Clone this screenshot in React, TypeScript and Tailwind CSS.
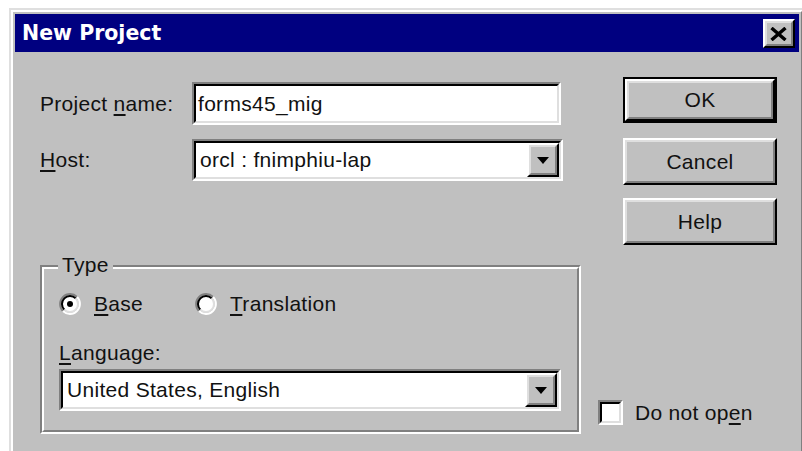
import type { ReactNode } from "react";

// Classic 3D bevels: raised for buttons, sunken for fields and check boxes.
const Raised = ({ className = "", children }: { className?: string; children?: ReactNode }) => (
  <div className={`border-2 border-t-white border-l-white border-r-black border-b-black bg-[#c0c0c0] ${className}`}>
    <div className="flex h-full w-full items-center justify-center border-2 border-t-[#dfdfdf] border-l-[#dfdfdf] border-r-[#808080] border-b-[#808080]">
      {children}
    </div>
  </div>
);

const Sunken = ({ className = "", children }: { className?: string; children?: ReactNode }) => (
  <div className={`border-2 border-t-[#808080] border-l-[#808080] border-r-white border-b-white ${className}`}>
    <div className="flex h-full w-full items-center border-2 border-t-black border-l-black border-r-[#dfdfdf] border-b-[#dfdfdf] bg-white">
      {children}
    </div>
  </div>
);

const Key = ({ children }: { children: ReactNode }) => (
  <span className="underline decoration-2 underline-offset-[3px]">{children}</span>
);

const ComboBox = ({ value, className = "" }: { value: string; className?: string }) => (
  <Sunken className={className}>
    <span className="flex-1 truncate pl-[4px]">{value}</span>
    <Raised className="h-full w-[32px] shrink-0">
      <svg width="12" height="7" viewBox="0 0 12 7">
        <path d="M0 0h12L6 7z" fill="#000" />
      </svg>
    </Raised>
  </Sunken>
);

const Radio = ({ checked }: { checked?: boolean }) => (
  <svg width="22" height="22" viewBox="0 0 22 22" className="shrink-0">
    <circle cx="11" cy="11" r="8" fill="#fff" />
    <path d="M3.93 18.07A10 10 0 0 1 18.07 3.93" fill="none" stroke="#808080" strokeWidth="2" />
    <path d="M18.07 3.93A10 10 0 0 1 3.93 18.07" fill="none" stroke="#fff" strokeWidth="2" />
    <path d="M5.34 16.66A8 8 0 0 1 16.66 5.34" fill="none" stroke="#000" strokeWidth="2" />
    <path d="M16.66 5.34A8 8 0 0 1 5.34 16.66" fill="none" stroke="#dfdfdf" strokeWidth="2" />
    {checked && <circle cx="11" cy="11" r="3" fill="#000" />}
  </svg>
);

export default function App() {
  return (
    <div className="h-[451px] w-[802px] overflow-hidden bg-white font-['Liberation_Sans',Arial,sans-serif] text-[21px] leading-[24px] tracking-[0.3px] text-[#111]">
      {/* window frame */}
      <div className="ml-[9px] mt-[8px] h-[460px] w-[796px] border-2 border-t-[#dfdfdf] border-l-[#dfdfdf] border-r-black border-b-black">
        <div className="h-full w-full border-2 border-t-white border-l-white border-r-[#808080] border-b-[#808080] bg-[#c0c0c0] p-[2px]">
          {/* title bar */}
          <div className="flex h-[38px] items-center justify-between bg-[#000080] pl-[7px] pr-[4px]">
            <span className="font-['DejaVu_Sans',sans-serif] text-[20.5px] font-bold tracking-normal text-white">New Project</span>
            <Raised className="h-[29px] w-[32px]">
              <svg width="17" height="14" viewBox="0 0 17 14" className="-ml-[1px] mt-[2px]">
                <path d="M1.5 1l14 12M15.5 1l-14 12" stroke="#000" strokeWidth="3.4" />
              </svg>
            </Raised>
          </div>

          <div className="flex pl-[25px]">
            {/* form fields */}
            <div className="w-[541px]">
              <div className="mt-[30px] flex h-[43px] items-center">
                <span className="w-[152px]">
                  Project <Key>n</Key>ame:
                </span>
                <Sunken className="h-[43px] w-[369px]">
                  <span className="pl-[2px]">forms45_mig</span>
                </Sunken>
              </div>
              <div className="mt-[14px] flex h-[42px] items-center">
                <span className="w-[152px]">
                  <Key>H</Key>ost:
                </span>
                <ComboBox value="orcl : fnimphiu-lap" className="h-[42px] w-[371px]" />
              </div>

              {/* Type group box */}
              <div className="relative mt-[84px]">
                <div className="border-2 border-t-[#808080] border-l-[#808080] border-r-white border-b-white">
                  <div className="border-2 border-t-white border-l-white border-r-[#808080] border-b-[#808080] pb-[19px] pl-[15px]">
                    <div className="mt-[24px] flex h-[22px] items-center">
                      <div className="flex w-[136px] items-center gap-[13px]">
                        <Radio checked />
                        <span>
                          <Key>B</Key>ase
                        </span>
                      </div>
                      <div className="flex items-center gap-[13px]">
                        <Radio />
                        <span>
                          <Key>T</Key>ranslation
                        </span>
                      </div>
                    </div>
                    <div className="mt-[26px] h-[24px]">
                      <Key>L</Key>anguage:
                    </div>
                    <ComboBox value="United States, English" className="mt-[4px] h-[42px] w-[502px]" />
                  </div>
                </div>
                <span className="absolute -top-[12px] left-[18px] bg-[#c0c0c0] px-[4px]">Type</span>
              </div>
            </div>

            {/* buttons */}
            <div className="ml-[17px] flex flex-col">
              <div className="ml-[25px] mt-[25px] h-[46px] w-[154px] border-2 border-black">
                <Raised className="h-full w-full">OK</Raised>
              </div>
              <Raised className="ml-[25px] mt-[15px] h-[47px] w-[154px]">Cancel</Raised>
              <Raised className="ml-[25px] mt-[13px] h-[47px] w-[154px]">Help</Raised>
              <div className="mt-[155px] flex h-[25px] items-center gap-[12px]">
                <Sunken className="h-[25px] w-[25px]" />
                <span>
                  Do not op<Key>e</Key>n
                </span>
              </div>
            </div>
          </div>
        </div>
      </div>
    </div>
  );
}
